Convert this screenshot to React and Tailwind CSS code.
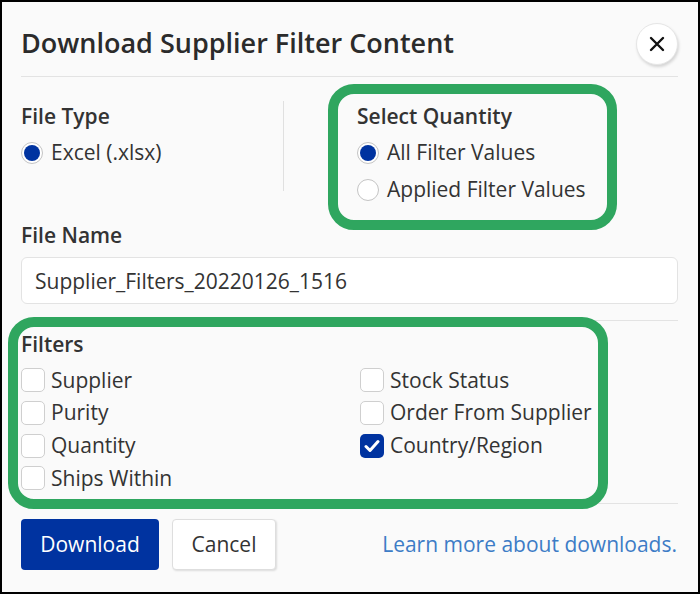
import React from "react";

const font = { fontFamily: "'Open Sans', 'Noto Sans', sans-serif" };

const Radio = ({ checked, label }) => (
  <label className="flex items-center h-[37px] gap-[8px] text-[21px] text-[#333]">
    <span className="w-[22px] h-[22px] rounded-full border border-[#c4c4c4] bg-white p-[2px] flex shrink-0">
      {checked && <span className="flex-1 rounded-full bg-[#0033a0]" />}
    </span>
    {label}
  </label>
);

const Check = ({ checked, label }) => (
  <label className="flex items-center h-[32.7px] gap-[6px] text-[21px] text-[#333]">
    {checked ? (
      <span className="w-[24px] h-[24px] rounded-[5px] bg-[#0033a0] flex items-center justify-center shrink-0">
        <svg width="16" height="14" viewBox="0 0 16 14" fill="none">
          <path d="M2 7.5l4 4L14 2.5" stroke="white" strokeWidth="3" strokeLinecap="round" strokeLinejoin="round" />
        </svg>
      </span>
    ) : (
      <span className="w-[24px] h-[24px] rounded-[5px] border border-[#cfcfcf] bg-white shrink-0" />
    )}
    {label}
  </label>
);

export default function App() {
  return (
    <div
      style={font}
      className="relative w-[700px] h-[594px] border-2 border-black bg-[#fafafa] pl-[19px] pr-[20px] flex flex-col"
    >
      {/* header */}
      <div className="flex items-center justify-between pt-[21px] pb-[11px] border-b border-[#e3e3e3]">
        <h1 className="text-[27px] font-semibold text-[#2b2b2b] leading-[36px] pb-[3px]">
          Download Supplier Filter Content
        </h1>
        <button className="w-[42px] h-[42px] rounded-full bg-white border border-[#e6e6e6] shadow-[1px_2px_3px_rgba(0,0,0,0.15)] flex items-center justify-center">
          <svg width="16" height="16" viewBox="0 0 16 16">
            <path d="M2 2l12 12M14 2L2 14" stroke="#111" strokeWidth="2.4" strokeLinecap="round" />
          </svg>
        </button>
      </div>

      {/* file type / quantity */}
      <div className="flex mt-[24px]">
        <div className="w-[262px] pt-[1px]">
          <div className="text-[21px] font-semibold text-[#333] leading-[28px] mb-[4px]">File Type</div>
          <Radio checked label="Excel (.xlsx)" />
        </div>
        <div className="w-px h-[90px] bg-[#e0e0e0]" />
        <div className="pl-[73px] pt-[1px]">
          <div className="text-[21px] font-semibold text-[#333] leading-[28px] mb-[4px]">Select Quantity</div>
          <Radio checked label="All Filter Values" />
          <Radio label="Applied Filter Values" />
        </div>
      </div>

      {/* file name */}
      <div className="text-[21px] font-semibold text-[#333] leading-[28px] mt-[13px]">File Name</div>
      <input
        readOnly
        value="Supplier_Filters_20220126_1516"
        style={font}
        className="mt-[8px] h-[47px] w-full rounded-[6px] border border-[#e3e3e3] bg-white px-[13px] text-[21px] text-[#333] outline-none"
      />

      {/* filters */}
      <div className="mt-[16px] border-t border-[#e3e3e3] pt-[9px] pb-[8px] border-b">
        <div className="text-[21px] font-semibold text-[#333] leading-[28px] mb-[6px]">Filters</div>
        <div className="grid grid-cols-[339px_1fr]">
          <div>
            <Check label="Supplier" />
            <Check label="Purity" />
            <Check label="Quantity" />
            <Check label="Ships Within" />
          </div>
          <div>
            <Check label="Stock Status" />
            <Check label="Order From Supplier" />
            <Check checked label="Country/Region" />
          </div>
        </div>
      </div>

      {/* footer */}
      <div className="flex items-center mt-[15px]">
        <button className="h-[51px] w-[138px] rounded-[4px] bg-[#0033a0] text-white text-[21px]">Download</button>
        <button className="ml-[13px] h-[51px] w-[104px] rounded-[4px] bg-white border border-[#dedede] shadow-[1px_1px_2px_rgba(0,0,0,0.12)] text-[21px] text-[#333]">
          Cancel
        </button>
        <a className="ml-auto mr-px text-[21px] text-[#3d7cc6]">Learn more about downloads.</a>
      </div>

      {/* annotation highlights */}
      <div className="absolute left-[326px] top-[82px] w-[289px] h-[146px] rounded-[26px] border-[10px] border-[#2fa65f] pointer-events-none" />
      <div className="absolute left-[6px] top-[315px] w-[600px] h-[192px] rounded-[26px] border-[10px] border-[#2fa65f] pointer-events-none" />
    </div>
  );
}
